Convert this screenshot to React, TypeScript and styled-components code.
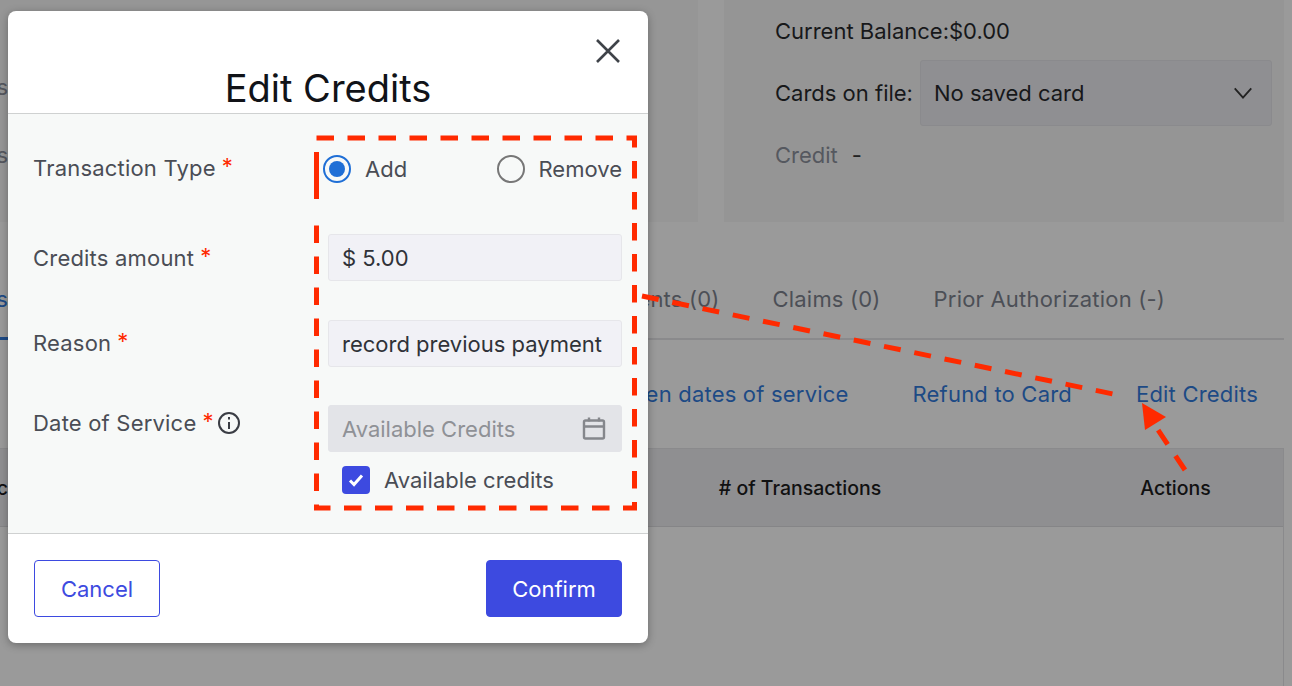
import React from 'react'
import styled, { createGlobalStyle } from 'styled-components'

const Global = createGlobalStyle`
  html, body { margin: 0; padding: 0; height: 100%; overflow: hidden; }
  body { font-family: Inter, "Liberation Sans", sans-serif; background: #9a9a9a; }
  * { box-sizing: border-box; }
`

const Page = styled.div`
  position: relative;
  width: 1292px;
  height: 686px;
  overflow: hidden;
  background: #9a9a9a;
  font-size: 22px;
`

const TopRow = styled.div`
  display: flex;
  gap: 26px;
  height: 222px;
  padding-right: 8px;
`

const LeftCard = styled.div`
  width: 698px;
  background: #969696;
  color: #55585f;
`

const Stub = styled.div<{ $top: number }>`
  width: 8px;
  overflow: hidden;
  direction: rtl;
  white-space: nowrap;
  padding-top: ${(p) => p.$top}px;
`

const BalanceCard = styled.div`
  flex: 1;
  background: #959595;
  padding: 17px 12px 0 51px;
  color: #17181a;
`

const BalanceLine = styled.div`
  line-height: 28px;
  height: 29px;
`

const CardsRow = styled.div`
  display: flex;
  align-items: center;
  gap: 7px;
  margin-top: 14px;
`

const CardSelect = styled.div`
  flex: 1;
  height: 66px;
  display: flex;
  align-items: center;
  justify-content: space-between;
  padding: 0 17px 0 13px;
  background: #8f8f92;
  border: 1px solid #8a8a8d;
  border-radius: 3px;
`

const CreditRow = styled.div`
  display: flex;
  gap: 14px;
  margin-top: 15px;
  line-height: 28px;
  color: #55585f;
`

const Dash = styled.span`
  color: #222;
`

const Tabs = styled.div`
  display: flex;
  justify-content: space-between;
  margin: 58px 8px 0 0;
  height: 60px;
  padding-right: 119px;
  border-bottom: 2px solid #8a8a8c;
  color: #4c4f56;
  letter-spacing: 0.2px;
`

const ActiveTab = styled.div`
  width: 8px;
  height: 60px;
  overflow: hidden;
  direction: rtl;
  color: #1d4a85;
  line-height: 38px;
  border-bottom: 3px solid #1d4a85;
`

const TabGroup = styled.div`
  display: flex;
  gap: 53px;
  line-height: 38px;
`

const Actions = styled.div`
  display: flex;
  justify-content: flex-end;
  gap: 64px;
  height: 108px;
  padding: 40px 34px 0 0;
  color: #1d4a85;
  line-height: 28px;
  letter-spacing: 0.2px;
`

const Table = styled.div`
  height: 238px;
  margin-right: 8px;
  border-right: 1px solid #8a8a8c;
`

const TableHead = styled.div`
  display: grid;
  grid-template-columns: 532px 536px 1fr;
  align-items: center;
  height: 79px;
  padding-top: 1px;
  background: #8f8f91;
  border-top: 1px solid #8a8a8c;
  border-bottom: 1px solid #858587;
  color: #111;
  font-size: 19.5px;
  font-weight: 500;
`

const HeadCell = styled.div`
  text-align: center;
`

const HeadStub = styled.div`
  width: 8px;
  overflow: hidden;
  direction: rtl;
  white-space: nowrap;
`

const Modal = styled.div`
  position: absolute;
  left: 8px;
  top: 11px;
  width: 640px;
  height: 632px;
  display: flex;
  flex-direction: column;
  background: #fff;
  border-radius: 8px;
  box-shadow: 0 2px 8px rgba(0, 0, 0, 0.3);
  overflow: hidden;
`

const ModalHead = styled.div`
  height: 103px;
  flex: none;
  position: relative;
  border-bottom: 1px solid #cfd1d1;
  text-align: center;
`

const Title = styled.h2`
  margin: 0;
  padding-top: 53px;
  font-size: 38px;
  line-height: 48px;
  font-weight: 400;
  color: #111318;
`

const Close = styled.button`
  position: absolute;
  top: 27px;
  right: 27px;
  width: 26px;
  height: 26px;
  padding: 0;
  border: 0;
  background: none;
  color: #3f4349;
`

const Body = styled.div`
  flex: 1;
  background: #f7f9f8;
  padding: 41px 26px 39px 25px;
  display: flex;
  flex-direction: column;
  color: #4a4d55;
`

const Row = styled.div<{ $mt?: number; $top?: boolean }>`
  display: grid;
  grid-template-columns: 295px 294px;
  align-items: ${(p) => (p.$top ? 'start' : 'center')};
  margin-top: ${(p) => p.$mt ?? 0}px;
`

const Label = styled.label<{ $pt?: number; $lift?: boolean }>`
  display: flex;
  align-items: center;
  gap: 6px;
  padding-top: ${(p) => p.$pt ?? 0}px;
  margin-top: ${(p) => (p.$lift ? -2 : 0)}px;
  line-height: 28px;
  letter-spacing: 0.2px;
`

const Star = styled.span`
  color: #ff2a00;
  margin-top: -4px;
`

const InfoIcon = styled.svg`
  margin-left: -3px;
`

const RadioRow = styled.div`
  display: flex;
  justify-content: space-between;
  margin-left: -5px;
`

const RadioItem = styled.div`
  display: flex;
  align-items: center;
  gap: 14px;
  line-height: 28px;
`

const RadioDot = styled.span<{ $on?: boolean }>`
  width: 28px;
  height: 28px;
  border-radius: 50%;
  border: 2px solid ${(p) => (p.$on ? '#1f6fd6' : '#777')};
  display: flex;
  align-items: center;
  justify-content: center;
  &::after {
    content: '';
    display: ${(p) => (p.$on ? 'block' : 'none')};
    width: 16px;
    height: 16px;
    border-radius: 50%;
    background: #1f6fd6;
  }
`

const Input = styled.div<{ $disabled?: boolean }>`
  height: 47px;
  display: flex;
  align-items: center;
  justify-content: space-between;
  padding: 0 14px 0 13px;
  border-radius: 3px;
  white-space: nowrap;
  background: ${(p) => (p.$disabled ? '#e3e4e8' : '#f1f1f6')};
  border: 1px solid ${(p) => (p.$disabled ? '#e3e4e8' : '#e6e6ea')};
  color: ${(p) => (p.$disabled ? '#8f9196' : '#2f3238')};
`

const CheckRow = styled.div`
  display: flex;
  align-items: center;
  gap: 14px;
  margin: 14px 0 0 14px;
  line-height: 28px;
`

const CheckBox = styled.span`
  width: 28px;
  height: 28px;
  border-radius: 4px;
  background: #3d4ae0;
  display: flex;
  align-items: center;
  justify-content: center;
`

const Footer = styled.div`
  height: 110px;
  flex: none;
  display: flex;
  justify-content: space-between;
  padding: 26px 26px 0;
  border-top: 1px solid #cfd1d1;
`

const Button = styled.button<{ $primary?: boolean }>`
  height: 57px;
  width: ${(p) => (p.$primary ? 136 : 126)}px;
  border-radius: 4px;
  border: 1px solid #3d4ae0;
  background: ${(p) => (p.$primary ? '#3d4ae0' : '#fff')};
  color: ${(p) => (p.$primary ? '#fff' : '#3d4ae0')};
  font: inherit;
`

const Annotations = styled.svg`
  position: absolute;
  left: 0;
  top: 0;
  pointer-events: none;
`

export default function App() {
  return (
    <Page>
      <Global />
      <TopRow>
        <LeftCard>
          <Stub $top={74}>Status</Stub>
          <Stub $top={42}>Address</Stub>
        </LeftCard>
        <BalanceCard>
          <BalanceLine>Current Balance:$0.00</BalanceLine>
          <CardsRow>
            <span>Cards on file:</span>
            <CardSelect>
              No saved card
              <svg width="22" height="22" viewBox="0 0 24 24" fill="none" stroke="#222" strokeWidth="2">
                <path d="M3 7l9 10 9-10" />
              </svg>
            </CardSelect>
          </CardsRow>
          <CreditRow>
            Credit <Dash>-</Dash>
          </CreditRow>
        </BalanceCard>
      </TopRow>

      <Tabs>
        <ActiveTab>Transactions</ActiveTab>
        <TabGroup>
          <span>Appointments (0)</span>
          <span>Claims (0)</span>
          <span>Prior Authorization (-)</span>
        </TabGroup>
      </Tabs>

      <Actions>
        <span>Bill between dates of service</span>
        <span>Refund to Card</span>
        <span>Edit Credits</span>
      </Actions>

      <Table>
        <TableHead>
          <HeadStub>Medic</HeadStub>
          <HeadCell># of Transactions</HeadCell>
          <HeadCell>Actions</HeadCell>
        </TableHead>
      </Table>

      <Modal>
        <ModalHead>
          <Title>Edit Credits</Title>
          <Close aria-label="Close">
            <svg width="26" height="26" viewBox="0 0 26 26" fill="none" stroke="currentColor" strokeWidth="2.6">
              <path d="M2 2l22 22M24 2L2 24" />
            </svg>
          </Close>
        </ModalHead>
        <Body>
          <Row>
            <Label $lift>
              Transaction Type <Star>*</Star>
            </Label>
            <RadioRow>
              <RadioItem>
                <RadioDot $on />
                Add
              </RadioItem>
              <RadioItem>
                <RadioDot />
                Remove
              </RadioItem>
            </RadioRow>
          </Row>
          <Row $mt={51}>
            <Label>
              Credits amount <Star>*</Star>
            </Label>
            <Input>$ 5.00</Input>
          </Row>
          <Row $mt={39}>
            <Label $lift>
              Reason <Star>*</Star>
            </Label>
            <Input>record previous payment</Input>
          </Row>
          <Row $mt={38} $top>
            <Label $pt={4}>
              Date of Service <Star>*</Star>
              <InfoIcon width="24" height="24" viewBox="0 0 24 24" fill="none" stroke="#3a3d44" strokeWidth="2">
                <circle cx="12" cy="12" r="10" />
                <path d="M12 11v7M12 6v2.4" />
              </InfoIcon>
            </Label>
            <div>
              <Input $disabled>
                Available Credits
                <svg width="26" height="26" viewBox="0 0 26 26" fill="none" stroke="#85878c" strokeWidth="2.4">
                  <rect x="3" y="4.5" width="20" height="18" rx="1.5" />
                  <path d="M3 10.5h20M8 1.5v4M18 1.5v4" />
                </svg>
              </Input>
              <CheckRow>
                <CheckBox>
                  <svg width="16" height="14" viewBox="0 0 16 14" fill="none" stroke="#fff" strokeWidth="3">
                    <path d="M2 7.5l4 4 8-9" />
                  </svg>
                </CheckBox>
                Available credits
              </CheckRow>
            </div>
          </Row>
        </Body>
        <Footer>
          <Button>Cancel</Button>
          <Button $primary>Confirm</Button>
        </Footer>
      </Modal>

      <Annotations width="1292" height="686" viewBox="0 0 1292 686" fill="none" stroke="#ff2a00" strokeWidth="5">
        <path d="M316.5 138H634.5V508H316.5V214" strokeDasharray="17.5 13.5" />
        <path d="M316.5 152V199" />
        <path d="M642 296L1113 394" strokeDasharray="17 13.9" />
        <path d="M1185 470L1158 430" strokeDasharray="17 14" />
        <path d="M1142 403L1166 417L1145 430Z" fill="#ff2a00" stroke="none" />
      </Annotations>
    </Page>
  )
}
